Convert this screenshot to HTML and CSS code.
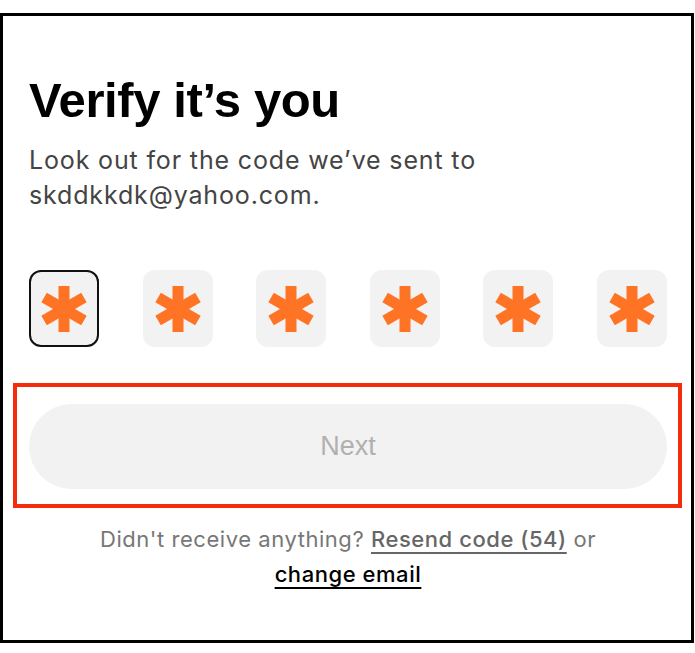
FILE: index.html
```html
<!DOCTYPE html>
<html lang="en">
<head>
<meta charset="utf-8">
<title>Verify it's you</title>
<link rel="stylesheet" href="styles.css">
</head>
<body>
<div class="frame">
  <h1 class="title">Verify it’s you</h1>
  <p class="subtitle">Look out for the code we’ve sent to<br>skddkkdk@yahoo.com.</p>
  <div class="code-row">
    <div class="code-box active"><svg class="star" viewBox="0 0 46 46"><g fill="#ff7325"><rect x="17.5" y="0" width="11" height="46"/><rect x="17.5" y="0" width="11" height="46" transform="rotate(60 23 23)"/><rect x="17.5" y="0" width="11" height="46" transform="rotate(120 23 23)"/></g></svg></div>
    <div class="code-box"><svg class="star" viewBox="0 0 46 46"><g fill="#ff7325"><rect x="17.5" y="0" width="11" height="46"/><rect x="17.5" y="0" width="11" height="46" transform="rotate(60 23 23)"/><rect x="17.5" y="0" width="11" height="46" transform="rotate(120 23 23)"/></g></svg></div>
    <div class="code-box"><svg class="star" viewBox="0 0 46 46"><g fill="#ff7325"><rect x="17.5" y="0" width="11" height="46"/><rect x="17.5" y="0" width="11" height="46" transform="rotate(60 23 23)"/><rect x="17.5" y="0" width="11" height="46" transform="rotate(120 23 23)"/></g></svg></div>
    <div class="code-box"><svg class="star" viewBox="0 0 46 46"><g fill="#ff7325"><rect x="17.5" y="0" width="11" height="46"/><rect x="17.5" y="0" width="11" height="46" transform="rotate(60 23 23)"/><rect x="17.5" y="0" width="11" height="46" transform="rotate(120 23 23)"/></g></svg></div>
    <div class="code-box"><svg class="star" viewBox="0 0 46 46"><g fill="#ff7325"><rect x="17.5" y="0" width="11" height="46"/><rect x="17.5" y="0" width="11" height="46" transform="rotate(60 23 23)"/><rect x="17.5" y="0" width="11" height="46" transform="rotate(120 23 23)"/></g></svg></div>
    <div class="code-box"><svg class="star" viewBox="0 0 46 46"><g fill="#ff7325"><rect x="17.5" y="0" width="11" height="46"/><rect x="17.5" y="0" width="11" height="46" transform="rotate(60 23 23)"/><rect x="17.5" y="0" width="11" height="46" transform="rotate(120 23 23)"/></g></svg></div>
  </div>
  <div class="highlight">
    <button class="next-btn" type="button">Next</button>
  </div>
  <p class="resend">Didn't receive anything? <a class="resend-link">Resend code (54)</a> or<br><a class="change-link">change email</a></p>
</div>
</body>
</html>
```

FILE: styles.css
```css
html, body {
  margin: 0;
  padding: 0;
  background: #ffffff;
}
body {
  padding-top: 13px;
  font-family: "Inter", "Liberation Sans", sans-serif;
}
.frame {
  box-sizing: border-box;
  width: 694px;
  height: 630px;
  border: 3px solid #000;
  padding: 0 24px 0 26px;
}
.title {
  margin: 56px 0 0;
  font-family: "Liberation Sans", Arial, sans-serif;
  font-weight: 700;
  font-size: 49px;
  line-height: 56px;
  letter-spacing: -0.4px;
  color: #000;
}
.subtitle {
  margin: 15px 0 0;
  font-size: 25px;
  line-height: 35px;
  letter-spacing: 0.85px;
  color: #444;
}
.code-row {
  margin-top: 57px;
  display: flex;
  justify-content: space-between;
}
.code-box {
  box-sizing: border-box;
  width: 70px;
  height: 77px;
  border-radius: 12px;
  background: #f2f2f2;
  display: flex;
  align-items: center;
  justify-content: center;
}
.code-box.active {
  border: 2px solid #111;
}
.star {
  width: 46px;
  height: 46px;
}
.highlight {
  margin: 36px -15px 0 -16px;
  border: 4px solid #f52c0c;
  padding: 17px 11px 15px 12px;
}
.next-btn {
  display: block;
  width: 100%;
  height: 85px;
  border: 0;
  border-radius: 43px;
  background: #f2f2f2;
  color: #b0b0b0;
  font-family: "Liberation Sans", Arial, sans-serif;
  font-size: 27px;
  padding: 0;
}
.resend {
  margin: 14px 0 0;
  text-align: center;
  font-size: 22px;
  line-height: 35px;
  letter-spacing: 0.55px;
  color: #777;
}
.resend-link {
  color: #666;
  font-weight: 500;
  text-decoration: underline;
  text-underline-offset: 5px;
  text-decoration-thickness: 2px;
}
.change-link {
  color: #000;
  font-weight: 500;
  text-decoration: underline;
  text-underline-offset: 5px;
  text-decoration-thickness: 2px;
}
```
